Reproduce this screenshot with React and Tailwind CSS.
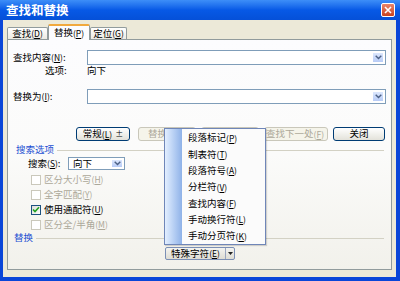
import React from 'react';

/* mnemonic key like (N) */
const Key = ({ k }) => (
  <span className="text-[8.5px]">
    (<span className="underline">{k}</span>)
  </span>
);

const DropArrow = () => (
  <div className="w-[12px] h-full rounded-[1px] border border-white bg-gradient-to-b from-[#dce7fd] to-[#b7cbf6] flex items-center justify-center">
    <svg width="7" height="5" viewBox="0 0 7 5">
      <path d="M0.7 0.8 L3.5 3.6 L6.3 0.8" stroke="#4d6185" strokeWidth="1.4" fill="none" />
    </svg>
  </div>
);

const Combo = ({ className = '', value }) => (
  <div className={`flex items-stretch bg-white border border-[#7f9db9] p-[1px] ${className}`}>
    <div className="flex-1 px-[3px] flex items-center leading-none">{value}</div>
    <DropArrow />
  </div>
);

const Btn = ({ children, disabled, className = '' }) => (
  <div
    className={`h-[14px] flex items-center justify-center rounded-[3px] border leading-none ${
      disabled
        ? 'border-[#c9c7ba] text-[#aca899] bg-[#f5f4ea]'
        : 'border-[#003c74] bg-gradient-to-b from-white to-[#e3e2da]'
    } ${className}`}
  >
    {children}
  </div>
);

const Check = ({ label, k, checked, disabled }) => (
  <div className="h-[15px] flex items-center pl-[23px]">
    <div
      className={`w-[10px] h-[10px] border flex items-center justify-center ${
        disabled ? 'border-[#cac8bb] bg-white' : 'border-[#1c5180] bg-gradient-to-br from-[#dcdcd7] to-white'
      }`}
    >
      {checked && (
        <svg width="8" height="7" viewBox="0 0 8 7">
          <path d="M1 3.5 L3 5.5 L7 1.2" stroke="#21a121" strokeWidth="1.6" fill="none" />
        </svg>
      )}
    </div>
    <span className={`ml-[3px] leading-none ${disabled ? 'text-[#aca899]' : ''}`}>
      {label}
      <Key k={k} />
    </span>
  </div>
);

const GroupTitle = ({ title, className = '' }) => (
  <div className={`h-[12px] flex items-center pr-[7px] ${className}`}>
    <span className="text-[#1b4fd2] leading-none">{title}</span>
    <div className="flex-1 h-px bg-[#d3d1c4] ml-[3px]" />
  </div>
);

const menuItems = [
  ['段落标记', 'P'],
  ['制表符', 'T'],
  ['段落符号', 'A'],
  ['分栏符', 'V'],
  ['查找内容', 'F'],
  ['手动换行符', 'L'],
  ['手动分页符', 'K'],
];

export default function App() {
  return (
    <div className="relative w-[400px] h-[281px] overflow-hidden bg-[#0a46d8] flex flex-col font-['Noto_Sans_CJK_SC',sans-serif] text-[9.5px] text-black">
      {/* Title bar */}
      <div className="h-[20px] shrink-0 flex items-center pl-[6px] pr-[5px] bg-gradient-to-b from-[#3d8ef8] via-[#0759e6] to-[#0550d8]">
        <span className="text-white font-bold text-[12.5px] leading-none">查找和替换</span>
        <div className="ml-auto w-[14px] h-[14px] rounded-[2px] border border-white bg-gradient-to-b from-[#e9846a] to-[#c8421d] flex items-center justify-center">
          <svg width="8" height="8" viewBox="0 0 8 8">
            <path d="M1 1 L7 7 M7 1 L1 7" stroke="white" strokeWidth="1.6" />
          </svg>
        </div>
      </div>

      {/* Body */}
      <div className="flex-1 ml-[3px] mr-[4px] mb-[4px] bg-[#ece9d8] pt-[4px] px-[4px] pb-[7px] flex flex-col">
        {/* Tabs */}
        <div className="h-[15px] flex items-end relative z-10">
          <div className="w-[41px] h-[12px] border border-b-0 border-[#919b9c] rounded-t-[2px] bg-gradient-to-b from-white to-[#eceae2] flex items-center justify-center leading-none">
            查找<Key k="D" />
          </div>
          <div className="w-[42px] h-[16px] -mb-[1px] border-x border-[#919b9c] border-t-[2px] border-t-[#f1a93d] rounded-t-[2px] bg-[#fcfcfe] flex items-center justify-center leading-none">
            替换<Key k="P" />
          </div>
          <div className="w-[37px] h-[12px] border border-b-0 border-[#919b9c] rounded-t-[2px] bg-gradient-to-b from-white to-[#eceae2] flex items-center justify-center leading-none">
            定位<Key k="G" />
          </div>
        </div>

        {/* Tab panel */}
        <div className="flex-1 border border-[#919b9c] bg-gradient-to-b from-[#fcfcfe] via-[#fbfbfa] to-[#f2f1eb] flex flex-col pt-[10px]">
          <div className="h-[15px] flex items-center px-[5px]">
            <span className="w-[74px] leading-none">
              查找内容<Key k="N" />:
            </span>
            <Combo className="flex-1 h-[15px]" value="" />
          </div>

          <div className="h-[12px] flex items-center pl-[37px] leading-none">
            <span className="w-[42px]">选项:</span>
            <span>向下</span>
          </div>

          <div className="h-[15px] mt-[12px] flex items-center px-[5px]">
            <span className="w-[74px] leading-none">
              替换为<Key k="I" />:
            </span>
            <Combo className="flex-1 h-[15px]" value="" />
          </div>

          <div className="h-[14px] mt-[23px] flex items-center pl-[68px]">
            <Btn className="w-[54px]">
              常规<Key k="L" />
              <span className="ml-[3px] text-[8px]">±</span>
            </Btn>
            <Btn disabled className="w-[58px] ml-[8px] justify-start pl-[9px]">
              替换
            </Btn>
            {/* covered by the drop-down menu */}
            <Btn disabled className="w-[58px] ml-[5px]" />
            <Btn disabled className="w-[64px] ml-[5px] justify-end pr-[3px]">
              查找下一处<Key k="F" />
            </Btn>
            <Btn className="w-[52px] ml-[5px]">关闭</Btn>
          </div>

          <GroupTitle title="搜索选项" className="mt-[3px] pl-[8px]" />

          <div className="h-[13px] mt-[1px] flex items-center pl-[20px]">
            <span className="w-[40px] leading-none">
              搜索<Key k="S" />:
            </span>
            <Combo className="w-[57px] h-[13px]" value="向下" />
          </div>

          <div className="mt-[2px] flex flex-col">
            <Check label="区分大小写" k="H" disabled />
            <Check label="全字匹配" k="Y" disabled />
            <Check label="使用通配符" k="U" checked />
            <Check label="区分全/半角" k="M" disabled />
          </div>

          <GroupTitle title="替换" className="pl-[6px]" />

          <div className="h-[13px] mt-[3px] flex items-center pl-[157px]">
            <div className="w-[70px] h-[13px] flex items-stretch border border-[#7b8fb5] rounded-[2px] bg-gradient-to-b from-[#f4f4f1] to-[#dedcd3] leading-none">
              <div className="flex-1 flex items-center justify-center">
                特殊字符<Key k="E" />
              </div>
              <div className="w-[9px] border-l border-[#9aa6bf] flex items-center justify-center">
                <svg width="5" height="3" viewBox="0 0 5 3">
                  <path d="M0 0 L5 0 L2.5 3 Z" fill="#222" />
                </svg>
              </div>
            </div>
          </div>
        </div>
      </div>

      {/* Special character drop-down menu */}
      <div className="absolute left-[164px] top-[128px] w-[102px] h-[117px] border border-[#6f86b8] bg-[#fbfbfb] flex shadow-[1px_1px_1px_rgba(0,0,0,0.15)]">
        <div className="w-[17px] bg-gradient-to-r from-[#e3efff] to-[#8fb2e8]" />
        <div className="flex-1 flex flex-col pt-[1px] pl-[6px]">
          {menuItems.map(([t, k]) => (
            <div key={k} className="h-[16.3px] flex items-center leading-none">
              {t}
              <Key k={k} />
            </div>
          ))}
        </div>
      </div>
    </div>
  );
}
